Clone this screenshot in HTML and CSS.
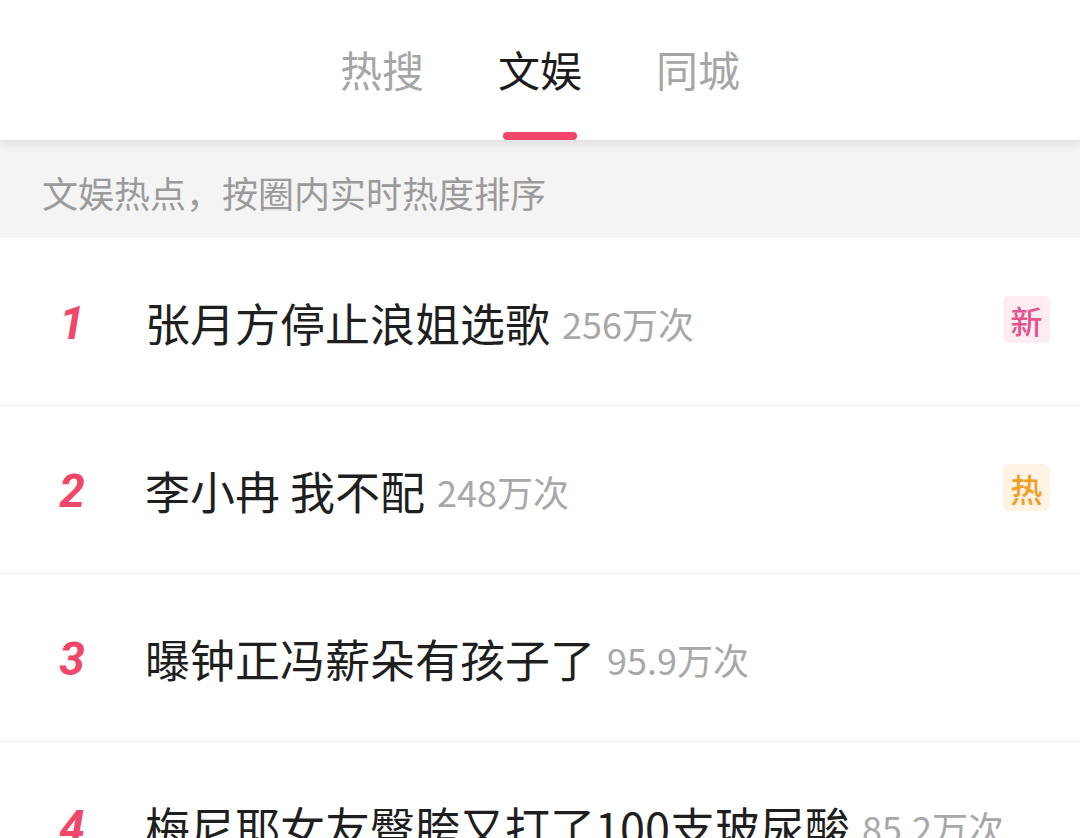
FILE: index.html
```html
<html>

<head>
    <meta charset="utf-8">
    <link rel="stylesheet" href="styles.css">
</head>

<body>
    <div class="header">
        <div class="tab">热搜</div>
        <div class="tab active">文娱</div>
        <div class="tab">同城</div>
    </div>
    <div class="subHeader">文娱热点，按圈内实时热度排序</div>
    <div class="list">
        <div class="row">
            <span class="num">1</span>
            <span class="title">张月方停止浪姐选歌</span>
            <span class="count">256万次</span>
            <span class="badge badgeNew">新</span>
        </div>
        <div class="row">
            <span class="num">2</span>
            <span class="title">李小冉 我不配</span>
            <span class="count">248万次</span>
            <span class="badge badgeHot">热</span>
        </div>
        <div class="row">
            <span class="num">3</span>
            <span class="title">曝钟正冯薪朵有孩子了</span>
            <span class="count">95.9万次</span>
        </div>
        <div class="row">
            <span class="num">4</span>
            <span class="title">梅尼耶女友臀胯又打了100支玻尿酸</span>
            <span class="count">85.2万次</span>
        </div>
    </div>
</body>

</html>
```

FILE: styles.css
```css
body {
    margin: 0;
    background-color: #ffffff;
    font-family: "Noto Sans CJK SC", "Noto Sans", sans-serif;
    overflow: hidden;
}

.header {
    position: relative;
    z-index: 2;
    height: 140px;
    display: flex;
    justify-content: center;
    gap: 74px;
    background-color: #ffffff;
    box-shadow: 0 3px 10px rgba(0, 0, 0, 0.1);
}

.tab {
    position: relative;
    font-size: 42px;
    line-height: 42px;
    padding-top: 48px;
    color: #a6a6a6;
}

.tab.active {
    color: #1c1c1c;
}

.tab.active::after {
    content: "";
    position: absolute;
    left: 5px;
    right: 5px;
    bottom: 0;
    height: 8px;
    border-radius: 4px;
    background-color: #f0476a;
}

.subHeader {
    height: 98px;
    box-sizing: border-box;
    padding: 30px 0 0 42px;
    background-color: #f4f4f4;
    color: #9b9b9b;
    font-size: 36px;
    line-height: 44px;
}

.row {
    height: 168px;
    box-sizing: border-box;
    display: flex;
    align-items: center;
    padding: 2px 30px 0 44px;
    border-bottom: 1px solid #efefef;
    white-space: nowrap;
}

.num {
    width: 56px;
    text-align: center;
    font-family: Roboto, "Liberation Sans", sans-serif;
    font-weight: bold;
    font-style: italic;
    font-size: 46px;
    color: #f0476a;
}

.title {
    margin-left: 45px;
    font-size: 45px;
    color: #1f1f1f;
}

.count {
    margin-left: 12px;
    font-size: 36px;
    color: #a8a8a8;
}

.badge {
    margin-left: auto;
    margin-top: -6px;
    width: 47px;
    height: 47px;
    border-radius: 6px;
    display: flex;
    align-items: center;
    justify-content: center;
    font-size: 32px;
    font-weight: 500;
}

.badgeNew {
    background-color: #fdedf2;
    color: #e4548c;
}

.badgeHot {
    background-color: #fff3e4;
    color: #f0a02a;
}
```
